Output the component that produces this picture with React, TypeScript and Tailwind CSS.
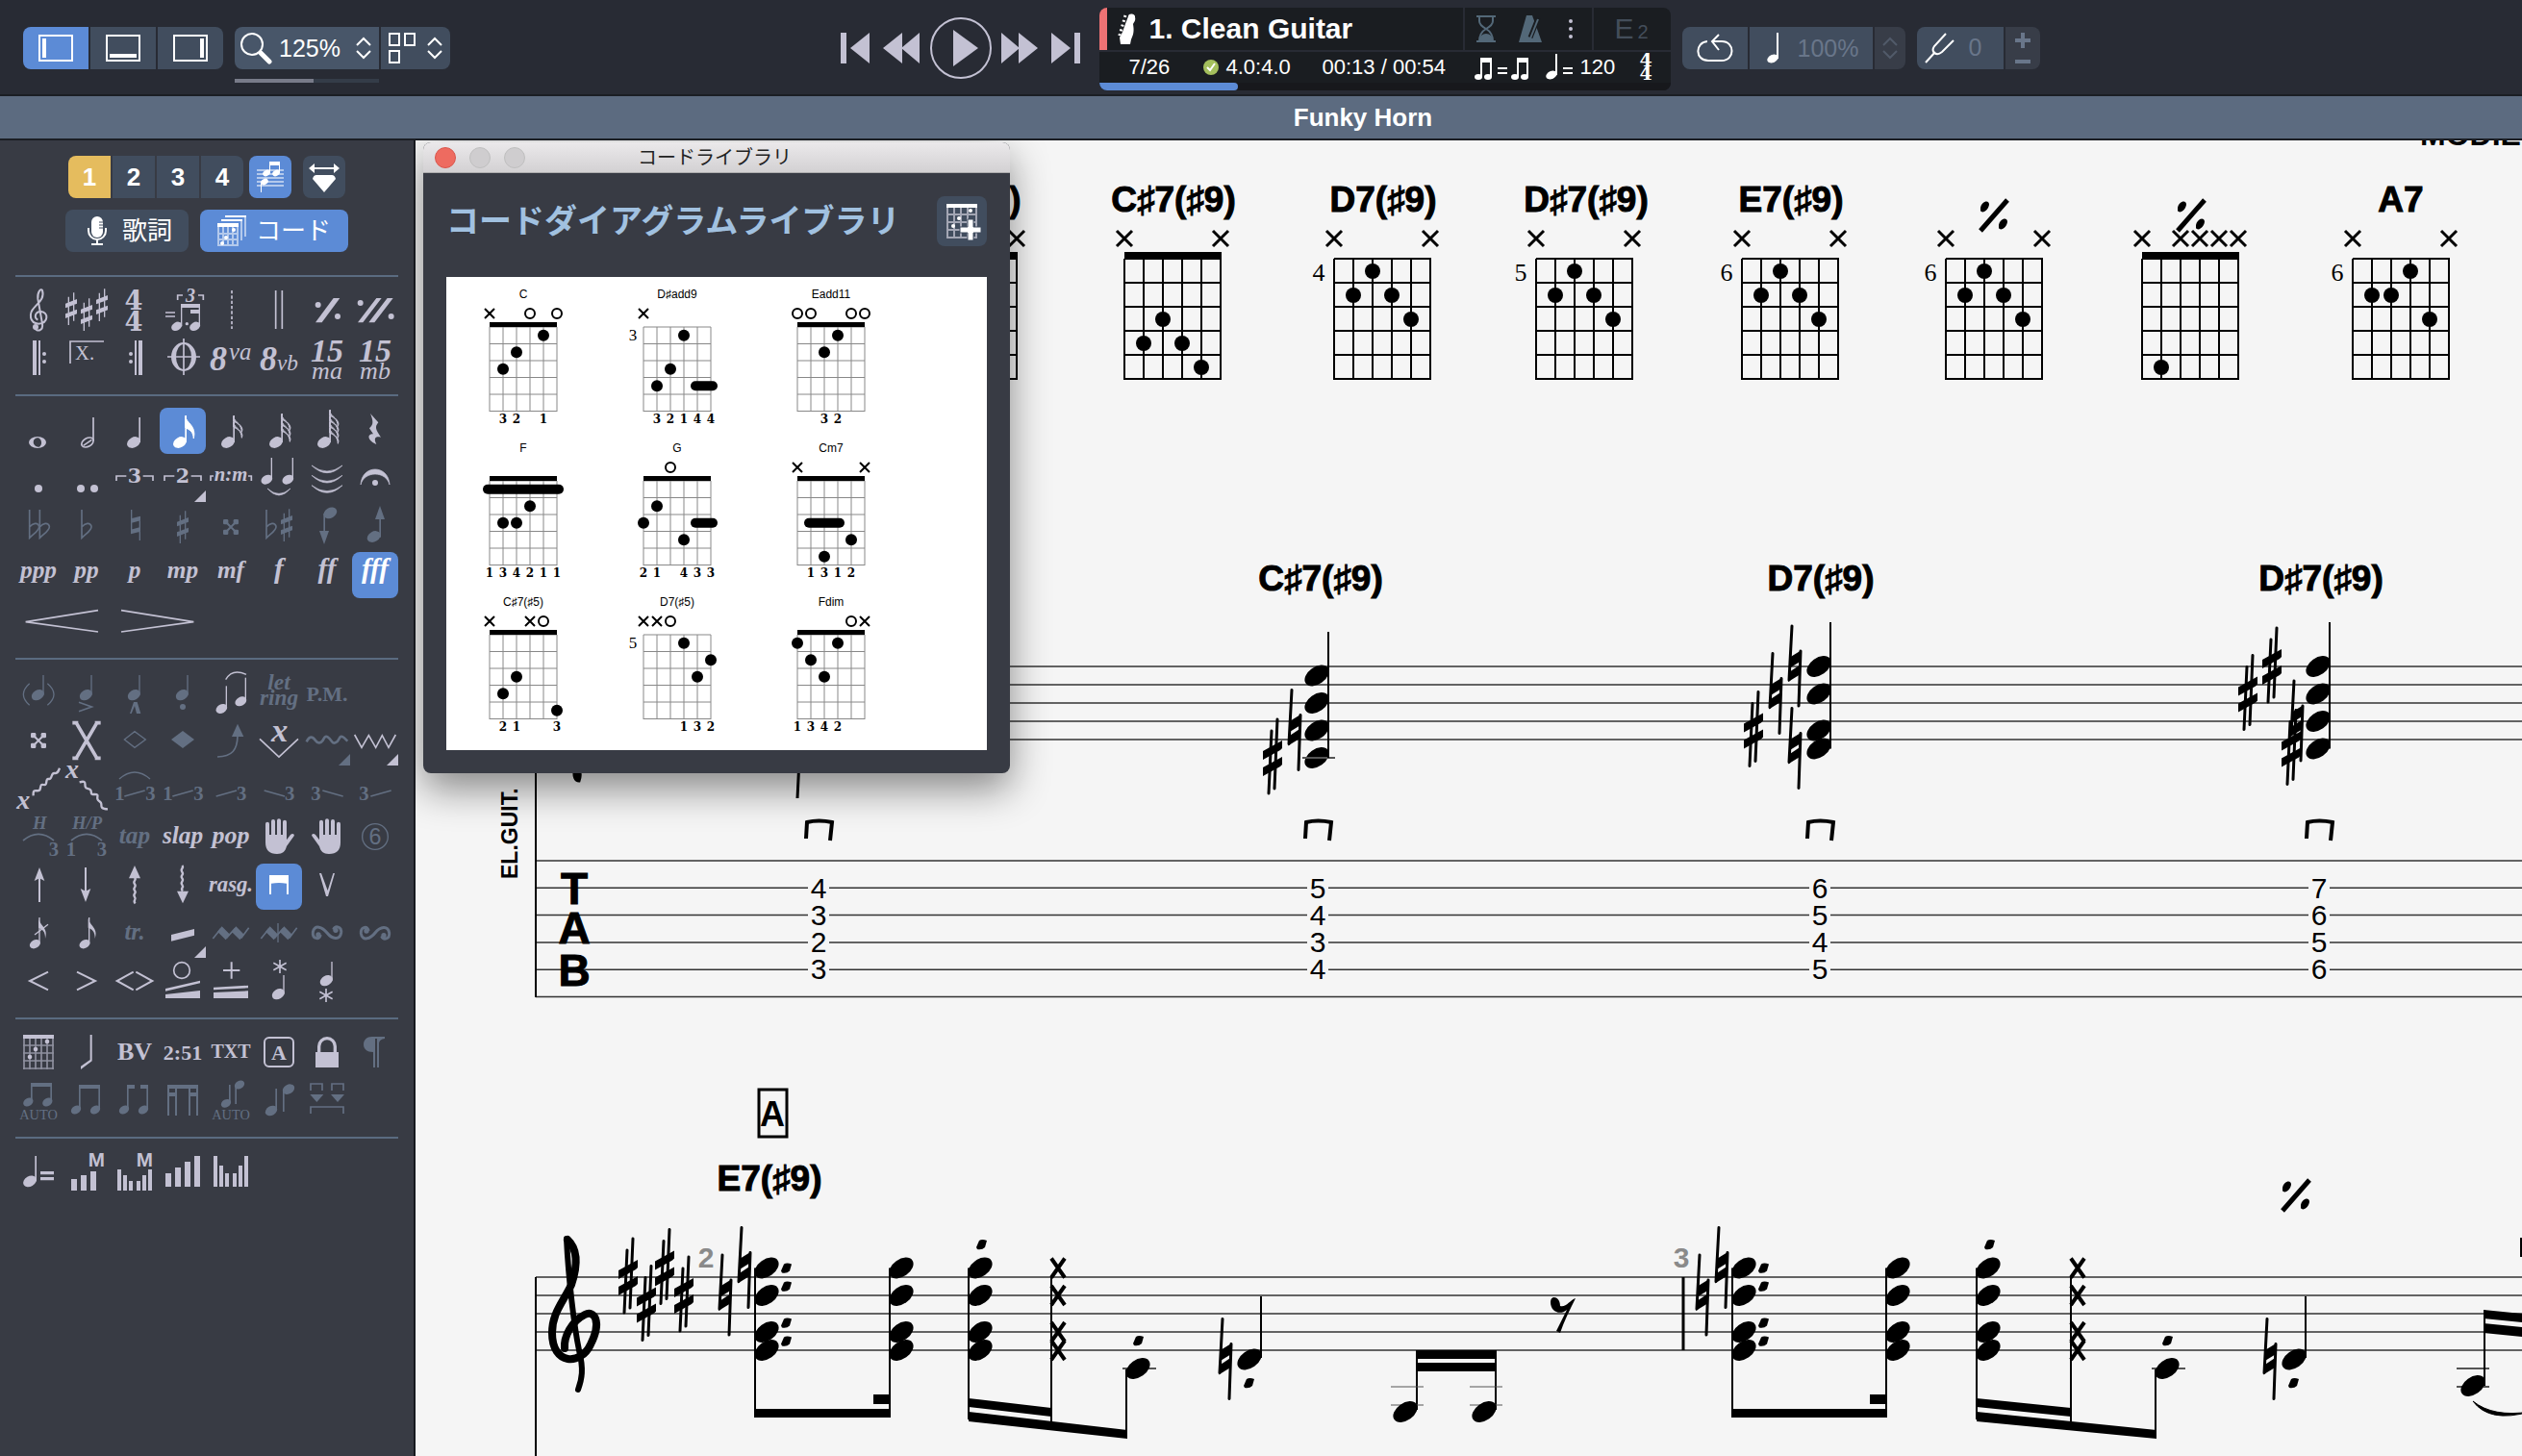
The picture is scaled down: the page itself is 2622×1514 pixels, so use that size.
import { Fragment, useState } from 'react'
import type { ReactNode } from 'react'

// ---------- palette glyphs (every cell is drawn on a 144 x 144 board) ----------

const Head = ({ x, y, s = 1 }: { x: number; y: number; s?: number }) => (
  <ellipse cx={x} cy={y} rx={22 * s} ry={16 * s} transform={`rotate(-30 ${x} ${y})`} />
)

// note with its stem going up to `top`
const Note = ({ x, y, top, s = 1 }: { x: number; y: number; top: number; s?: number }) => (
  <>
    <Head x={x} y={y} s={s} />
    <rect x={x + 20 * s - 4} y={top} width={s < 1 ? 4 : 5} height={y - top} />
  </>
)

const Flags = ({ x, top, n }: { x: number; top: number; n: number }) => (
  <>
    {Array.from({ length: n }, (_, i) => (
      <path
        key={i}
        d={`M${x} ${top + i * 18} c2 22 36 28 26 ${n === 1 ? 70 : 50} c-2 -26 -16 -28 -26 -34z`}
        stroke="currentColor"
        strokeWidth={3}
      />
    ))}
  </>
)

const Sharp = ({ x, y }: { x: number; y: number }) => (
  <path
    transform={`translate(${x} ${y})`}
    d="M-10 -37h4v88h-4z M6 -50h4v88h-4z M-18 -16L18 -30V-16L-18 -2z M-18 16L18 2V16L-18 30z"
  />
)

const Flat = ({ x }: { x: number }) => (
  <path
    d={`M${x} 18V106C${x + 14} 92 ${x + 32} 82 ${x + 30} 70C${x + 26} 56 ${x + 10} 60 ${x} 72`}
    fill="none"
    stroke="currentColor"
    strokeWidth={5}
  />
)

const DoubleSharp = ({ y }: { y: number }) => (
  <g transform={`translate(72 ${y})`}>
    <path d="M-18 -18L18 18M18 -18L-18 18" stroke="currentColor" strokeWidth={6} />
    {[[-24, -24], [8, -24], [-24, 8], [8, 8]].map(([a, b]) => (
      <rect key={`${a}${b}`} x={a} y={b} width={16} height={16} rx={4} />
    ))}
  </g>
)

const Line = ({ d, w = 5, dash }: { d: string; w?: number; dash?: string }) => (
  <path d={d} fill="none" stroke="currentColor" strokeWidth={w} strokeDasharray={dash} />
)

const Dot = ({ x, y, r = 9 }: { x: number; y: number; r?: number }) => <circle cx={x} cy={y} r={r} />

type TProps = { x?: number; y: number; size: number; children: ReactNode; kind?: string; anchor?: 'start' | 'middle' }
const T = ({ x = 72, y, size, children, kind = 'font-bold italic', anchor = 'middle' }: TProps) => (
  <text x={x} y={y} fontSize={size} textAnchor={anchor} className={`font-['Liberation_Serif',serif] ${kind}`}>
    {children}
  </text>
)

// engraved style digits
const Digit = ({ x = 72, y, size, children }: { x?: number; y: number; size: number; children: ReactNode }) => (
  <text x={x} y={y} fontSize={size} textAnchor="middle" className="font-['DejaVu_Serif',serif] font-bold">
    {children}
  </text>
)

const Corner = () => <path d="M108 144L144 108V144z" />

const Asterisk = ({ x, y }: { x: number; y: number }) => (
  <Line d={`M${x} ${y - 21}V${y + 21}M${x - 20} ${y - 11}L${x + 20} ${y + 11}M${x - 20} ${y + 11}L${x + 20} ${y - 11}`} />
)

const Bars = ({ w, list }: { w: number; list: number[][] }) => (
  <>
    {list.map(([x, y, h]) => (
      <rect key={x} x={x} y={y} width={w} height={h} />
    ))}
  </>
)

const Hand = () => (
  <path d="M30 26a6 6 0 0 1 12 0V60h6V18a6 6 0 0 1 12 0V60h6V16a6 6 0 0 1 12 0V60h6V20a6 6 0 0 1 12 0V76L108 60C114 54 122 58 119 64L96 96C92 112 84 120 66 120C42 120 30 108 30 84z" />
)

const Turn = () => (
  <>
    <Line w={9} d="M52 60C46 42 26 48 28 68C32 94 58 84 72 66C88 46 112 42 116 66C118 86 98 90 92 76" />
    <Dot x={45} y={60} r={8} />
    <Dot x={99} y={74} r={8} />
  </>
)

const Mordent = () => (
  <>
    <Line w={5} d="M16 84L40 54L60 80L84 54L106 80L128 50" />
    <path d="M30 62L44 46L70 72L56 88z M74 62L88 46L114 72L100 88z" />
  </>
)

type Cell = { name: string; icon: ReactNode; dim?: boolean; active?: boolean; wide?: boolean }
const c = (name: string, icon: ReactNode, state?: 'dim' | 'active' | 'wide'): Cell => ({
  name,
  icon,
  dim: state === 'dim',
  active: state === 'active',
  wide: state === 'wide',
})

const gap = (name: string) => c(name, null)

const SIGNS: Cell[] = [
  c('Clef', <>
    <Line w={6} d="M60 128C64 142 88 140 84 116L70 38C68 16 80 4 84 12C92 36 72 50 60 64C40 84 44 114 72 116C104 114 104 80 80 78C60 78 58 98 70 104" />
    <Dot x={63} y={126} />
  </>),
  c('Key signature', <><Sharp x={24} y={69} /><Sharp x={72} y={87} /><Sharp x={120} y={57} /></>),
  c('Time signature', <><Digit x={69} y={72} size={82}>4</Digit><Digit x={69} y={138} size={82}>4</Digit></>),
  c('Triplet feel', <>
    <Line d="M18 81H48M18 93H48M56 42V27H72M120 27H136V42" w={5} />
    <T x={96} y={48} size={60}>3</T>
    <Line w={4} d="M68 54V124M124 54V124" />
    <path d="M66 54h60v12h-60z M96 72h30v12h-30z" />
    <Head x={53} y={124} s={0.8} /><Head x={110} y={124} s={0.8} /><Dot x={85} y={116} r={5} />
  </>),
  c('Free time', <Line d="M75 12V132" dash="10 6" />),
  c('Double bar', <Line d="M62 12V132M82 12V132" />),
  c('Simile', <><path d="M36 112H56L112 36H92z" /><Dot x={44} y={57} /><Dot x={105} y={93} /></>),
  c('Double simile', <>
    <path d="M18 112H34L92 36H76z M52 112H70L128 36H110z" /><Dot x={26} y={51} /><Dot x={122} y={93} />
  </>),
  c('Repeat open', <><path d="M54 18h12v108h-12z M72 18h6v108h-6z" /><Dot x={90} y={60} r={6} /><Dot x={90} y={84} r={6} /></>),
  c('Alternate ending', <><Line d="M21 90V21H126" /><T x={36} y={78} size={62} anchor="start" kind="">X.</T></>),
  c('Repeat close', <><path d="M84 18h12v108h-12z M72 18h6v108h-6z" /><Dot x={60} y={60} r={6} /><Dot x={60} y={84} r={6} /></>),
  c('Coda', <>
    <path fillRule="evenodd" d="M36 69a39 45 0 0 1 78 0a39 45 0 0 1 -78 0z M51 69a24 39 0 0 0 48 0a24 39 0 0 0 -48 0z" />
    <Line d="M75 12V126M24 69H126" />
  </>),
  c('8va', <><T x={6} y={111} size={108} anchor="start">8</T><T x={66} y={78} size={74} anchor="start" kind="italic">va</T></>),
  c('8vb', <><T x={12} y={111} size={108} anchor="start">8</T><T x={66} y={111} size={70} anchor="start" kind="italic">vb</T></>),
  c('15ma', <><T y={84} size={102}>15</T><T y={138} size={78} kind="italic">ma</T></>),
  c('15mb', <><T y={84} size={102}>15</T><T y={138} size={78} kind="italic">mb</T></>),
]

const DURATIONS: Cell[] = [
  c('Whole note', <path fillRule="evenodd" d="M42 108a27 18 0 0 1 54 0a27 18 0 0 1 -54 0z M58 100c-6 12 4 24 16 22c10 -4 10 -22 -2 -28c-6 -2 -12 2 -14 6z" />),
  c('Half note', <>
    <ellipse cx={75} cy={108} rx={20} ry={13} transform="rotate(-30 75 108)" fill="none" stroke="currentColor" strokeWidth={5} />
    <Line w={5} d="M62 118L88 100" /><Line d="M93 30V104" />
  </>),
  c('Quarter note', <Note x={69} y={108} top={30} />),
  c('Eighth note', <><Note x={63} y={108} top={24} /><Flags x={80} top={26} n={1} /></>, 'active'),
  c('16th note', <><Note x={63} y={108} top={24} /><Flags x={80} top={26} n={2} /></>),
  c('32nd note', <><Note x={63} y={108} top={18} /><Flags x={80} top={20} n={3} /></>),
  c('64th note', <><Note x={63} y={108} top={6} /><Flags x={80} top={8} n={4} /></>),
  c('Rest', <path d="M57 18L82 46C70 60 74 68 90 92C74 88 66 94 76 114C50 104 44 82 66 82L54 64C68 52 66 40 57 18z" />),
  c('Dotted', <Dot x={72} y={102} r={12} />),
  c('Double dotted', <><Dot x={54} y={102} r={12} /><Dot x={96} y={102} r={12} /></>),
  c('Triplet', <><Line d="M15 78V63H46M98 63H129V78" /><Digit y={83} size={62}>3</Digit></>),
  c('Duplet', <><Line d="M15 78V63H46M98 63H129V78" /><Digit y={83} size={62}>2</Digit><Corner /></>),
  c('Tuplet', <><Line d="M9 78V63H18M126 63H136V78" /><T y={78} size={62}>n:m</T></>),
  c('Tie', <>
    <Note x={34} y={74} top={6} s={0.85} /><Note x={100} y={74} top={6} s={0.85} />
    <path d="M36 102Q72 144 108 102Q72 134 36 102z" stroke="currentColor" strokeWidth={2} />
  </>),
  c('Tie beat', <path stroke="currentColor" strokeWidth={2} d="M24 30Q72 76 120 30Q72 66 24 30z M24 61Q72 107 120 61Q72 97 24 61z M24 92Q72 138 120 92Q72 128 24 92z" />),
  c('Fermata', <><path d="M27 90C30 26 114 26 117 90C106 46 38 46 27 90z" stroke="currentColor" strokeWidth={2} /><Dot x={72} y={84} /></>),
  c('Double flat', <><Flat x={44} /><Flat x={76} /></>, 'dim'),
  c('Flat', <Flat x={57} />, 'dim'),
  c('Natural', <path d="M60 18h4v72h-4z M86 42h4v72h-4z M60 46L90 38V52L60 60z M60 80L90 72V86L60 94z" />, 'dim'),
  c('Sharp', <Sharp x={72} y={72} />, 'dim'),
  c('Double sharp', <DoubleSharp y={72} />, 'dim'),
  c('Enharmonic', <><Flat x={33} /><Sharp x={96} y={66} /></>, 'dim'),
  c('Semitone down', <><Head x={82} y={28} /><path d="M61 30h5v60h-5z M48 84H78L63 126z" /></>, 'dim'),
  c('Semitone up', <><Head x={68} y={102} /><path d="M85 30h5v74h-5z" /><path d="M72 48H102L87 6z" /></>, 'dim'),
  ...['ppp', 'pp', 'p', 'mp', 'mf', 'f', 'ff', 'fff'].map(d =>
    c(d, <T y={80} size={d.startsWith('f') ? 88 : 76}>{d}</T>, d === 'fff' ? 'active' : undefined)
  ),
  c('Crescendo', <Line d="M258 32L32 68L258 99" />, 'wide'),
  c('Decrescendo', <Line d="M30 32L256 68L30 99" />, 'wide'),
]

const slide = (d: string, one: number | null, three: number) => (
  <>
    <Line d={d} />
    {one !== null && <T x={one} y={101} size={62} anchor="start" kind="font-bold">1</T>}
    <T x={three} y={101} size={62} anchor="start" kind="font-bold">3</T>
  </>
)

const EFFECTS: Cell[] = [
  c('Ghost note', <><Note x={70} y={74} top={12} s={0.95} /><Line w={4} d="M44 38Q6 72 44 106M100 38Q140 72 100 106" /></>, 'dim'),
  c('Accent', <><Note x={70} y={74} top={12} s={0.95} /><Line d="M48 97L88 111L48 125" /></>, 'dim'),
  c('Heavy accent', <><Note x={70} y={74} top={12} s={0.95} /><path d="M57 132L69 96H80L91 132H78L72 108L62 132z" /></>, 'dim'),
  c('Staccato', <><Note x={70} y={74} top={12} s={0.95} /><Dot x={72} y={111} /></>, 'dim'),
  c('Legato', <><Note x={43} y={117} top={46} s={0.85} /><Note x={103} y={94} top={20} s={0.85} /><Line w={4} d="M56 26Q76 -10 120 10" /></>),
  c('Let ring', <><T y={56} size={70}>let</T><T y={106} size={70}>ring</T></>, 'dim'),
  c('Palm mute', <T y={94} size={66} kind="font-bold">P.M.</T>, 'dim'),
  gap(''),
  c('Dead note', <DoubleSharp y={66} />),
  c('Dead slap', <Line w={11} d="M38 8L106 124M106 8L38 124M28 11H46M98 11H116M28 121H46M98 121H116" />),
  c('Natural harmonic', <Line w={4} d="M40 63L72 38L106 63L72 88z" />, 'dim'),
  c('Artificial harmonic', <path d="M36 63L72 36L108 63L72 90z" />, 'dim'),
  c('Bend', <><Line d="M30 117C76 116 92 96 93 52" /><path d="M93 14L112 54H75z" /></>, 'dim'),
  c('Whammy dip', <><T x={74} y={68} size={104}>x</T><Line d="M12 61L72 117L132 61" /></>),
  c('Vibrato', <><Line w={8} d="M8 70C18 50 28 54 36 66S56 74 62 60S80 58 86 68S104 74 110 60S126 58 136 68" /><Corner /></>, 'dim'),
  c('Wide vibrato', <><Line d="M8 48L30 88L52 50L74 88L94 50L114 88L136 48" /><Corner /></>),
  c('Pick scrape up', <><T x={4} y={130} size={84} anchor="start">x</T><Line w={7} d="M56 88C54 64 66 76 74 72S74 50 88 54S92 34 104 36S110 16 122 18S134 10 138 2" /></>),
  c('Pick scrape down', <><T x={6} y={34} size={84} anchor="start">x</T><Line w={7} d="M50 46C72 40 66 50 68 60S84 62 86 74S84 84 98 84S104 90 106 98S118 106 118 114S116 130 138 130" /></>),
  c('Legato slide', <>{slide('M40 90L104 72', 10, 106)}<Line w={4} d="M24 36Q72 -6 120 36" /></>, 'dim'),
  c('Shift slide', slide('M40 90L104 72', 10, 106), 'dim'),
  c('Slide in from below', slide('M26 90L90 72', null, 90), 'dim'),
  c('Slide in from above', slide('M26 72L90 90', null, 90), 'dim'),
  c('Slide out downwards', slide('M58 72L122 90', null, 22), 'dim'),
  c('Slide out upwards', slide('M58 90L122 72', null, 22), 'dim'),
  c('Hammer on', <><T x={76} y={41} size={56}>H</T><Line d="M24 78Q72 38 120 78" /><T x={104} y={125} size={62} anchor="start" kind="font-bold">3</T></>, 'dim'),
  c('Hammer on pull off', <><T x={74} y={41} size={56}>H/P</T><Line d="M24 78Q72 38 120 78" /><T x={8} y={125} size={62} anchor="start" kind="font-bold">1</T><T x={104} y={125} size={62} anchor="start" kind="font-bold">3</T></>, 'dim'),
  c('Tapping', <T y={86} size={76}>tap</T>, 'dim'),
  c('Slap', <T y={86} size={76}>slap</T>),
  c('Pop', <T y={86} size={78}>pop</T>),
  c('Left hand fingering', <Hand />),
  c('Right hand fingering', <g transform="translate(144 0) scale(-1 1)"><Hand /></g>),
  c('String number', <>
    <circle cx={72} cy={66} r={40} fill="none" stroke="currentColor" strokeWidth={4} />
    <text x={72} y={91} fontSize={70} textAnchor="middle" className="font-['Liberation_Sans',sans-serif]">6</text>
  </>, 'dim'),
  c('Arpeggio up', <><Line w={6} d="M75 44V120" /><path d="M75 12L91 54L75 46L59 54z" /></>),
  c('Arpeggio down', <><Line w={6} d="M69 12V90" /><path d="M69 120L85 78L69 86L53 78z" /></>),
  c('Brush up', <><path d="M72 6L90 46H54z" /><Line w={7} d="M72 44c8 8 -8 10 0 20s-8 10 0 20s-8 10 0 20s-8 10 2 20" /></>),
  c('Brush down', <><path d="M72 124L90 86H54z" /><Line w={7} d="M70 6c8 8 -8 10 0 20s-8 10 0 20s-8 10 0 20s-8 10 2 20" /></>),
  c('Rasgueado', <T y={86} size={68}>rasg.</T>),
  c('Downstroke', <path d="M42 36H102V96H96V62Q72 58 48 62V96H42z" />, 'active'),
  c('Upstroke', <path d="M48 30H54L74 84L91 30H96L75 102H69z" />),
  gap(''),
  c('Grace note before beat', <><Note x={61} y={101} top={18} s={0.8} /><path d="M72 20C76 44 104 50 93 84C94 60 82 54 72 50z" /><Line w={4} d="M60 72L102 40" /></>),
  c('Grace note on beat', <><Note x={66} y={101} top={18} s={0.8} /><path d="M77 20C81 44 110 50 98 84C99 60 87 54 77 50z" /></>),
  c('Trill', <T y={88} size={74}>tr.</T>, 'dim'),
  c('Tremolo picking', <><path d="M36 72L108 54V74L36 92z" /><Corner /></>),
  c('Upper mordent', <Mordent />, 'dim'),
  c('Lower mordent', <><Mordent /><Line w={4} d="M69 36V96" /></>, 'dim'),
  c('Turn', <g transform="translate(0 132) scale(1 -1)"><Turn /></g>, 'dim'),
  c('Inverted turn', <Turn />, 'dim'),
  c('Fade in', <Line w={6} d="M102 38L45 66L102 94" />),
  c('Fade out', <Line w={6} d="M42 38L99 66L42 94" />),
  c('Volume swell', <Line w={6} d="M68 38L17 66L68 94M76 38L127 66L76 94" />),
  c('Wah open', <>
    <circle cx={69} cy={33} r={25} fill="none" stroke="currentColor" strokeWidth={5} />
    <path d="M18 90L126 65V73L18 98z M18 108L126 96V120H18z" />
  </>),
  c('Wah close', <><Line w={6} d="M74 7V59M48 33H100" /><path d="M18 86L126 80V88L18 94z M18 102L126 97V120H18z" /></>),
  c('Pedal down', <><Asterisk x={75} y={21} /><Note x={70} y={107} top={48} s={0.95} /></>),
  c('Pedal up', <><Note x={70} y={65} top={6} s={0.95} /><Asterisk x={69} y={111} /></>),
]

const ANNOTATIONS: Cell[] = [
  c('Chord', <>
    <path className="text-[#8f91a0]" fill="none" stroke="currentColor" strokeWidth={5} d="M27 18V126M45 18V126M63 18V126M81 18V126M99 18V126M117 18V126M24 51H120M24 75H120M24 99H120M24 123H120" />
    <rect x={24} y={18} width={96} height={12} />
    <Dot x={99} y={39} r={7} /><Dot x={63} y={63} r={7} /><Dot x={45} y={87} r={7} />
  </>),
  c('Slash notation', <path d="M83 18H89V100L54 126V116L83 96z" />),
  c('Barre', <T y={97} size={78} kind="font-bold">BV</T>),
  c('Timer', <T y={96} size={66} kind="font-bold">2:51</T>),
  c('Text', <T y={91} size={60} kind="font-bold">TXT</T>),
  c('Section', <>
    <rect x={27} y={27} width={90} height={90} rx={14} fill="none" stroke="currentColor" strokeWidth={6} />
    <T y={95} size={66} kind="font-bold">A</T>
  </>),
  c('Lock', <><rect x={36} y={72} width={72} height={48} /><Line w={10} d="M47 74V54a25 25 0 0 1 50 0V74" /></>),
  c('Paragraph', <path d="M102 24V30Q86 32 84 44V120H78V30H72V120H66V72C46 72 36 62 36 48S46 24 62 24z" />, 'dim'),
  c('Auto beam', <><Head x={40} y={78} s={0.75} /><Head x={100} y={78} s={0.75} /><path d="M48 18h66v60h-5v-48h-56v48h-5z" /><T y={132} size={43} kind="">AUTO</T></>, 'dim'),
  c('Force beam', <><Head x={39} y={102} s={0.75} /><Head x={99} y={102} s={0.75} /><path d="M48 24h66v78h-5v-66h-56v66h-5z" /></>, 'dim'),
  c('Break beam', <><Head x={39} y={102} s={0.75} /><Head x={99} y={102} s={0.75} /><path d="M48 24h24v12h-19v66h-5z M90 24h24v78h-5v-66h-19z" /></>, 'dim'),
  c('Break secondary beam', <path d="M24 24h96v12h-96z M24 36h6v84h-6z M48 36h6v84h-6z M90 36h6v84h-6z M114 36h6v84h-6z M30 48h18v12h-18z M96 48h18v12h-18z" />, 'dim'),
  c('Auto stem', <><Head x={57} y={82} s={0.75} /><Head x={99} y={24} s={0.75} /><path d="M66 24h5v58h-5z M85 24h5v60h-5z" /><T y={132} size={43} kind="">AUTO</T></>, 'dim'),
  c('Invert stem', <><Head x={48} y={105} s={0.9} /><Head x={102} y={38} s={0.9} /><path d="M61 36h5v68h-5z M84 38h5v70h-5z" /></>, 'dim'),
  c('Bar break', <><Line d="M21 42V21H57V42M87 42V21H123V42M21 114V93H123V114" /><path d="M19 54H61L40 78z M84 54H126L105 78z" /></>, 'dim'),
]

const AUTOMATIONS: Cell[] = [
  c('Tempo', <><Note x={45} y={97} top={18} /><path d="M78 66h42v10h-42z M78 84h42v10h-42z" /></>),
  c('Master volume', <><Bars w={18} list={[[24, 90, 36], [54, 78, 48], [84, 66, 60]]} /><text x={77} y={50} fontSize={62} className="font-['Liberation_Sans',sans-serif] font-bold">M</text></>),
  c('Master pan', <><Bars w={12} list={[[18, 60, 66], [36, 78, 48], [54, 96, 30], [78, 96, 30], [96, 78, 48], [114, 60, 66]]} /><text x={77} y={50} fontSize={62} className="font-['Liberation_Sans',sans-serif] font-bold">M</text></>),
  c('Track volume', <Bars w={18} list={[[18, 72, 42], [48, 54, 60], [78, 36, 78], [108, 18, 96]]} />),
  c('Track pan', <Bars w={12} list={[[18, 18, 96], [36, 48, 66], [54, 72, 42], [78, 72, 42], [96, 48, 66], [114, 18, 96]]} />),
]

function Palette({ cells, className }: { cells: Cell[]; className: string }) {
  return (
    <section className={`grid grid-cols-[repeat(8,48px)] gap-0.5 border-t-2 border-[#5a6b80] ${className}`}>
      {cells.map((cell, i) =>
        cell.icon === null ? (
          <span key={i} />
        ) : (
          <button
            key={i}
            aria-label={cell.name}
            className={`h-12 rounded-lg ${cell.wide ? 'col-span-2' : ''} ${
              cell.active ? 'bg-[#5c8bd6] text-white' : cell.dim ? 'text-[#636f82]' : 'text-[#c3c1d3]'
            }`}
          >
            <svg viewBox={cell.wide ? '0 0 294 144' : '0 0 144 144'} className="h-full w-full overflow-visible" fill="currentColor">
              {cell.icon}
            </svg>
          </button>
        )
      )}
    </section>
  )
}

// ---------- toolbar ----------

const Chevrons = () => (
  <svg viewBox="0 0 16 24" className="h-6 w-4 shrink-0" fill="none" stroke="currentColor" strokeWidth={2}>
    <path d="M1 9L8 2L15 9M1 15L8 22L15 15" />
  </svg>
)

function PanelButton({ label, bar, on, shape }: { label: string; bar: string; on?: boolean; shape: string }) {
  return (
    <button aria-label={label} className={`flex h-11 w-[68px] items-center justify-center ${shape} ${on ? 'bg-[#5c8bd6]' : 'bg-[#414d5e]'}`}>
      <svg viewBox="0 0 36 28" className="h-7 w-9">
        <rect x={1} y={1} width={34} height={26} fill="none" stroke="#fff" strokeWidth={2} />
        <path d={bar} fill="#fff" />
      </svg>
    </button>
  )
}

const TRANSPORT = [
  ['Go to start', 'h-8 w-[30px] mr-[14px]', '0 0 30 32', 'M0 0H6V32H0z M30 0V32L10 16z'],
  ['Rewind', 'h-8 w-[38px] mr-[11px]', '0 0 38 32', 'M20 0V32L0 16z M38 0V32L19 16z'],
  ['Play', 'h-16 w-16 mr-[10px]', '0 0 64 64', 'M24 13L50 32L24 51z'],
  ['Forward', 'h-8 w-[38px] mr-[14px]', '0 0 38 32', 'M0 0V32L19 16z M18 0V32L38 16z'],
  ['Go to end', 'h-8 w-[30px] mr-5', '0 0 30 32', 'M24 0H30V32H24z M0 0V32L20 16z'],
]

const BeamedPair = ({ x }: { x: number }) => (
  <>
    <ellipse cx={x + 4} cy={24} rx={4} ry={3} />
    <ellipse cx={x + 14} cy={24} rx={4} ry={3} />
    <path d={`M${x + 6} 4h12v20h-2v-15h-8v15h-2z`} />
  </>
)

function Toolbar() {
  const [zoom, setZoom] = useState('125%')

  return (
    <header className="grid h-[100px] grid-cols-[1fr_auto_1fr] items-start border-b-2 border-[#1b1e24] bg-[#282b34] pr-3 text-white">
      <div className="flex gap-3 pl-6 pt-7">
        <div className="flex gap-0.5">
          <PanelButton label="Edition palette" on shape="rounded-l-lg" bar="M4 4h4v20h-4z" />
          <PanelButton label="Global view" shape="" bar="M4 20h28v4h-28z" />
          <PanelButton label="Song inspector" shape="rounded-r-lg" bar="M28 4h4v20h-4z" />
        </div>
        <div className="flex items-start gap-0.5">
          <div>
            <label className="flex h-11 w-[150px] items-center rounded-l-lg bg-[#485669] pl-1.5 pr-2">
              <svg viewBox="0 0 34 34" className="h-[34px] w-[34px] shrink-0" stroke="#fff" fill="none">
                <circle cx={12} cy={13} r={11} strokeWidth={2} />
                <path d="M21 22L30 31" strokeWidth={5} strokeLinecap="round" />
              </svg>
              <select
                aria-label="Zoom"
                value={zoom}
                onChange={e => setZoom(e.target.value)}
                className="ml-1.5 w-full appearance-none bg-transparent text-[25px] leading-8 outline-none"
              >
                <option>100%</option>
                <option>125%</option>
                <option>150%</option>
              </select>
              <Chevrons />
            </label>
            <div className="mt-[10px] h-1 bg-[#343c48]">
              <div className="h-1 w-[82px] bg-[#787b89]" />
            </div>
          </div>
          <button aria-label="Page layout" className="flex h-11 w-[72px] items-center justify-between rounded-r-lg bg-[#414d5e] px-2">
            <svg viewBox="0 0 28 32" className="h-8 w-7" fill="none" stroke="#fff" strokeWidth={2}>
              <path d="M1 1h10v12h-10z M17 1h10v12h-10z M1 19h10v12h-10z" />
            </svg>
            <Chevrons />
          </button>
        </div>
      </div>

      <div className="flex">
        <nav className="mt-[18px] flex h-16 items-center text-[#c3c1d3]">
          {TRANSPORT.map(([label, cls, box, d]) => (
            <button key={label} aria-label={label} className={cls}>
              <svg viewBox={box} className="h-full w-full" fill="currentColor">
                {label === 'Play' && <circle cx={32} cy={32} r={31} fill="none" stroke="currentColor" strokeWidth={2} />}
                <path d={d} />
              </svg>
            </button>
          ))}
        </nav>

        <div className="mt-2 w-[594px] overflow-hidden rounded-lg bg-[#1a1d21]">
          <div className="flex h-11">
            <div className="w-2 bg-[#ee7274]" />
            <div className="flex flex-1 items-center pl-2.5">
              <svg viewBox="0 0 22 34" className="h-[34px] w-[22px]" fill="#fff">
                <path d="M12 4C12 0 20 1 19 5C20 8 18 10 17 12C18 18 18 22 15 28L14 33H4L3 26C6 22 8 14 12 4z" />
                <path d="M9 3L2 27" stroke="#fff" strokeWidth={3} strokeDasharray="2 3" />
              </svg>
              <span className="ml-3 text-[30px] font-bold leading-9">1. Clean Guitar</span>
            </div>
            <div className="flex w-[134px] items-center justify-between border-l-2 border-[#282b34] pl-3 pr-5 text-[#536878]">
              <svg viewBox="0 0 20 28" className="h-7 w-5" fill="currentColor">
                <path d="M0 0h20v2h-20z M0 26h20v2h-20z M3 26Q4 19 10 19T17 26z" />
                <path d="M3 1V6Q3 10 10 14Q17 18 17 27M17 1V6Q17 10 10 14Q3 18 3 27" fill="none" stroke="currentColor" strokeWidth={2} />
              </svg>
              <svg viewBox="0 0 24 28" className="ml-5 h-7 w-6" fill="currentColor">
                <path d="M8 0H14L24 28H0z" />
                <path d="M20 3L12 23" stroke="#1a1d21" strokeWidth={5} />
                <path d="M20 4L12 24" stroke="currentColor" strokeWidth={2} />
              </svg>
              <svg viewBox="0 0 4 20" className="ml-6 h-5 w-1" fill="#c3c1d3">
                <circle cx={2} cy={2} r={2} /><circle cx={2} cy={10} r={2} /><circle cx={2} cy={18} r={2} />
              </svg>
            </div>
            <div className="flex w-[82px] items-baseline border-l-2 border-[#282b34] pl-[22px] pt-1 text-[30px] leading-9 text-[#434d5a]">
              E<span className="ml-1 text-xl">2</span>
            </div>
          </div>
          <div className="grid h-[34px] grid-cols-[77px_124px_158px_74px_97px_auto] items-center border-t-2 border-[#282b34] pl-[31px] text-[22px] leading-8">
            <span>7/26</span>
            <span className="flex items-center gap-2">
              <svg viewBox="0 0 16 16" className="h-4 w-4">
                <circle cx={8} cy={8} r={8} fill="#a4bf5d" />
                <path d="M4 8L7 11L12 4" fill="none" stroke="#fff" strokeWidth={2} />
              </svg>
              4.0:4.0
            </span>
            <span>00:13 / 00:54</span>
            <svg viewBox="0 0 58 28" className="h-7 w-[58px]" fill="#fff">
              <BeamedPair x={0} /><BeamedPair x={38} />
              <path d="M24 14h10v2h-10z M24 19h10v2h-10z" />
            </svg>
            <span className="flex items-center gap-2">
              <svg viewBox="0 0 28 28" className="h-7 w-7" fill="#fff">
                <ellipse cx={6} cy={22} rx={6} ry={4} transform="rotate(-25 6 22)" />
                <path d="M10 0h2v22h-2z M18 14h10v2h-10z M18 19h10v2h-10z" />
              </svg>
              120
            </span>
            <svg viewBox="0 0 14 30" className="h-[30px] w-[14px] overflow-visible" fill="#fff">
              <text x={7} y={14} fontSize={19} textAnchor="middle" className="font-['DejaVu_Serif',serif] font-bold">4</text>
              <text x={7} y={28} fontSize={19} textAnchor="middle" className="font-['DejaVu_Serif',serif] font-bold">4</text>
            </svg>
          </div>
          <div className="h-2 bg-[#17181c]">
            <div className="h-2 w-36 rounded-r bg-[#5c8bd6]" />
          </div>
        </div>
      </div>

      <div className="ml-3 mt-7 flex h-11 gap-3 text-[#69768a]">
        <div className="flex gap-0.5">
          <button aria-label="Loop" className="flex w-[68px] items-center justify-center rounded-l-lg bg-[#414d5e]">
            <svg viewBox="0 0 38 30" className="h-[30px] w-[38px]" fill="none" stroke="#fff" strokeWidth={2}>
              <path d="M11 8C-2 9 -2 28 12 28H26C40 28 40 8 26 8H16M23 1L16 8L23 17" />
            </svg>
          </button>
          <label className="flex w-[128px] items-center bg-[#414d5e] pl-[18px]">
            <svg viewBox="0 0 14 32" className="h-8 w-[14px] shrink-0" fill="#fff">
              <ellipse cx={6} cy={27} rx={6} ry={4} transform="rotate(-25 6 27)" />
              <path d="M10 0h2v27h-2z" />
            </svg>
            <select aria-label="Relative speed" className="ml-[18px] w-full appearance-none bg-transparent text-[25px] leading-8">
              <option>100%</option>
            </select>
          </label>
          <button aria-label="Change speed" className="flex w-8 items-center justify-center rounded-r-lg bg-[#383d48] text-[#515a69]">
            <Chevrons />
          </button>
        </div>
        <div className="flex gap-0.5">
          <button className="flex w-[90px] items-center gap-3.5 rounded-l-lg bg-[#414d5e] pl-2 text-[25px]">
            <svg viewBox="0 0 32 32" className="h-8 w-8" fill="none" stroke="#fff" strokeWidth={2}>
              <path d="M1 31L11 20M22 1L10 14C6 20 12 25 18 20L30 8" />
            </svg>
            0
          </button>
          <div className="flex w-9 flex-col items-center justify-around rounded-r-lg bg-[#383d48]">
            <button aria-label="Transpose up">
              <svg viewBox="0 0 16 16" className="h-4 w-4" fill="currentColor"><path d="M6 0h4v6h6v4h-6v6h-4v-6h-6v-4h6z" /></svg>
            </button>
            <button aria-label="Transpose down">
              <svg viewBox="0 0 16 4" className="h-1 w-4" fill="currentColor"><path d="M0 0h16v4h-16z" /></svg>
            </button>
          </div>
        </div>
      </div>
    </header>
  )
}

// ---------- sidebar ----------

function Sidebar() {
  const [voice, setVoice] = useState(1)

  return (
    <aside className="w-[432px] shrink-0 border-r-2 border-[#17191f] bg-[#383b44] px-4 pt-4 text-white">
      <div className="flex justify-center">
        <div className="mr-1.5 flex gap-0.5">
          {[1, 2, 3, 4].map(v => (
            <button
              key={v}
              onClick={() => setVoice(v)}
              className={`h-11 w-11 text-[26px] font-bold first:rounded-l-lg last:rounded-r-lg ${
                voice === v ? 'bg-[#e5bc5e]' : 'bg-[#414d5e]'
              }`}
            >
              {v}
            </button>
          ))}
        </div>
        <button aria-label="Multivoice" className="mr-3 h-11 w-11 rounded-lg bg-[#5c8bd6]">
          <svg viewBox="0 0 44 44" fill="#fff">
            <path d="M8 15h28M8 19h28M8 23h28M8 27h28M8 31h28" stroke="#b3c9ec" strokeWidth={2} />
            <ellipse cx={18} cy={18} rx={4} ry={3} transform="rotate(-30 18 18)" />
            <ellipse cx={28} cy={18} rx={4} ry={3} transform="rotate(-30 28 18)" />
            <path d="M21 6h11v12h-1v-8h-9v8h-1z" />
            <ellipse cx={16} cy={27} rx={4} ry={3} transform="rotate(-30 16 27)" />
            <path d="M12 27h1v11h-1z" />
          </svg>
        </button>
        <button aria-label="Design mode" className="h-11 w-11 rounded-lg bg-[#414d5e]">
          <svg viewBox="0 0 44 44" fill="#fff">
            <path d="M6 13L12 8V12H32V8L38 13L32 18V14H12V18z M10 24Q11 20 14 20H30Q33 20 34 24L22 38z" />
          </svg>
        </button>
      </div>

      <div className="mb-6 mt-3 flex justify-center gap-3 text-[26px]">
        <button className="flex h-11 w-32 items-center justify-center gap-4 rounded-lg bg-[#414d5e] pl-1.5">
          <svg viewBox="0 0 20 30" className="h-[30px] w-5" fill="#fff">
            <rect x={4} y={0} width={12} height={22} rx={6} />
            <path d="M1 12V15A9 9 0 0 0 19 15V12M10 24V28M4 29H16" fill="none" stroke="#fff" strokeWidth={2} />
            <path d="M12 6h4M12 9h4M12 12h4" stroke="#414d5e" />
          </svg>
          歌詞
        </button>
        <button className="flex h-11 w-[154px] items-center justify-center gap-2.5 rounded-lg bg-[#5c8bd6]">
          <svg viewBox="0 0 30 32" className="h-8 w-[30px]" fill="#fff">
            <path d="M29 1V22M25 5V26" stroke="#b3c9ec" strokeWidth={2} />
            <path d="M8 0h22v2h-22z M4 4h22v2h-22z M0 8h22v4h-22z" />
            <path d="M1 12V32M6 12V32M11 12V32M16 12V32M21 12V32M0 19H22M0 25H22M0 31H22" stroke="#b3c9ec" strokeWidth={2} />
            <circle cx={17} cy={15} r={2} /><circle cx={9} cy={23} r={2} /><circle cx={5} cy={29} r={2} />
          </svg>
          コード
        </button>
      </div>

      <Palette cells={SIGNS} className="pb-3.5 pt-2.5" />
      <Palette cells={DURATIONS} className="py-3" />
      <Palette cells={EFFECTS} className="py-3" />
      <Palette cells={ANNOTATIONS} className="pb-3.5 pt-2.5" />
      <Palette cells={AUTOMATIONS} className="pt-3" />
    </aside>
  )
}

// ---------- chord diagrams ----------

type Diagram = {
  name: string
  marks: string // one sign per string: x, o or blank
  dots: number[][] // [string, fret]
  barre?: number[] // [from string, to string, fret]
  fret?: number
  fingers?: string
}

const LIBRARY: Diagram[] = [
  { name: 'C', marks: 'x  o o', dots: [[4, 1], [2, 2], [1, 3]], fingers: ' 32 1 ' },
  { name: 'D♯add9', marks: 'x     ', dots: [[3, 1], [2, 3], [1, 4]], barre: [4, 5, 4], fret: 3, fingers: ' 32144' },
  { name: 'Eadd11', marks: 'oo  oo', dots: [[3, 1], [2, 2]], fingers: '  32  ' },
  { name: 'F', marks: '      ', dots: [[3, 2], [1, 3], [2, 3]], barre: [0, 5, 1], fingers: '134211' },
  { name: 'G', marks: '  o   ', dots: [[1, 2], [0, 3], [3, 4]], barre: [4, 5, 3], fingers: '21 433' },
  { name: 'Cm7', marks: 'x    x', dots: [[4, 4], [2, 5]], barre: [1, 3, 3], fingers: ' 1312 ' },
  { name: 'C♯7(♯5)', marks: 'x  xo ', dots: [[2, 3], [1, 4], [5, 5]], fingers: ' 21  3' },
  { name: 'D7(♯5)', marks: 'xxo   ', dots: [[3, 1], [5, 2], [4, 3]], fret: 5, fingers: '   132' },
  { name: 'Fdim', marks: '    ox', dots: [[0, 1], [3, 1], [1, 2], [2, 3]], fingers: '1342  ' },
]

function LibraryChord({ chord }: { chord: Diagram }) {
  const sx = (s: number) => 45 + s * 14
  const fy = (f: number) => 52 + (f - 0.5) * 17.5

  return (
    <svg viewBox="0 0 160 160" className="h-40 w-40">
      <text x={80} y={22} fontSize={12} textAnchor="middle" className="font-['Liberation_Sans','DejaVu_Sans',sans-serif]">
        {chord.name}
      </text>
      {[...chord.marks].map((m, i) =>
        m === 'x' ? (
          <path key={i} d={`M${sx(i) - 5} 33l10 10m0 -10l-10 10`} stroke="#000" strokeWidth={2} />
        ) : m === 'o' ? (
          <circle key={i} cx={sx(i)} cy={38} r={5} fill="none" stroke="#000" strokeWidth={2} />
        ) : null
      )}
      <path
        d={[0, 1, 2, 3, 4, 5].map(i => `M${sx(i)} 52V140M45 ${52 + i * 17.5}H115`).join('')}
        stroke="#888"
        strokeWidth={1}
      />
      {chord.fret ? (
        <text x={34} y={66} fontSize={17} textAnchor="middle" className="font-['Liberation_Serif',serif]">{chord.fret}</text>
      ) : (
        <rect x={45} y={47} width={70} height={5} />
      )}
      {chord.dots.map(([s, f]) => (
        <circle key={`${s}-${f}`} cx={sx(s)} cy={fy(f)} r={6} />
      ))}
      {chord.barre && (
        <rect
          x={sx(chord.barre[0]) - 7}
          y={fy(chord.barre[2]) - 5}
          width={sx(chord.barre[1]) - sx(chord.barre[0]) + 14}
          height={10}
          rx={5}
        />
      )}
      {[...(chord.fingers ?? '')].map((n, i) => (
        <text key={i} x={sx(i)} y={152} fontSize={12} textAnchor="middle" className="font-['DejaVu_Serif',serif] font-bold">
          {n.trim()}
        </text>
      ))}
    </svg>
  )
}

function ChordLibrary() {
  return (
    <div role="dialog" aria-label="コードライブラリ" className="absolute left-2 top-0.5 w-[610px] overflow-hidden rounded-lg bg-[#383b44] shadow-[0_16px_40px_rgba(0,0,0,0.45)]">
      <div className="grid h-8 grid-cols-[1fr_auto_1fr] items-center border-b border-[#adacad] bg-linear-to-b from-[#ebe9eb] to-[#d3d1d3] pl-3 pr-4 text-xl leading-6 text-[#222]">
        <div className="flex gap-3.5">
          <button aria-label="Close" className="h-[22px] w-[22px] rounded-full border border-[#d9564c] bg-[#ee6b60]" />
          <button aria-label="Minimise" className="h-[22px] w-[22px] rounded-full border border-[#bfbfbf] bg-[#cfcdcf]" />
          <button aria-label="Zoom window" className="h-[22px] w-[22px] rounded-full border border-[#bfbfbf] bg-[#cfcdcf]" />
        </div>
        <span>コードライブラリ</span>
      </div>
      <div className="flex items-center justify-between px-6 py-6">
        <h2 className="text-[34px] font-bold leading-[52px] text-[#a1c1e0]">コードダイアグラムライブラリ</h2>
        <button aria-label="Add chord" className="h-[52px] w-[52px] rounded-lg bg-[#414d5e]">
          <svg viewBox="0 0 52 52" fill="#fff">
            <path d="M11 12V43M18 12V43M25 12V43M32 12V43M41 12V43M10 19H42M10 27H42M10 35H42M10 43H42" stroke="#a3a6b4" strokeWidth={2} />
            <path d="M10 8h32v4h-32z" />
            <circle cx={35} cy={15} r={2} /><circle cx={23} cy={23} r={2} /><circle cx={17} cy={31} r={2} />
            <path d="M32 24h6v8h8v6h-8v8h-6v-8h-8v-6h8z" stroke="#414d5e" strokeWidth={1} />
          </svg>
        </button>
      </div>
      <div className="mx-6 mb-6 mt-2 grid grid-cols-[repeat(3,160px)] bg-white pb-3">
        {LIBRARY.map(chord => (
          <LibraryChord key={chord.name} chord={chord} />
        ))}
      </div>
    </div>
  )
}

// ---------- score ----------

const CHORD_TEXT = "font-['Liberation_Sans','DejaVu_Sans',sans-serif] font-bold"

const ChordName = ({ x, y, children }: { x: number; y: number; children: ReactNode }) => (
  <text x={x} y={y - 4} fontSize={37} textAnchor="middle" stroke="#000" strokeWidth={1} className={CHORD_TEXT}>{children}</text>
)

const Simile = ({ x, y }: { x: number; y: number }) => (
  <g transform={`translate(${x} ${y})`}>
    <path d="M-14 16L14 -16" stroke="#000" strokeWidth={5} />
    <path d="M-14 -8C-13 -14 -6 -17 -5 -12C-5 -6 -12 -1 -14 -5z M5 10C6 4 13 1 14 6C14 12 7 17 5 13z" />
  </g>
)

const D7_SHAPE = [[2, 1], [1, 2], [3, 2], [4, 3]]

const HEADER_CHORDS: (Diagram & { x: number; label: number })[] = [
  { name: 'E7(♯9)', x: 957, label: 1007, marks: 'x    x', dots: D7_SHAPE },
  { name: 'C♯7(♯9)', x: 1169, label: 1220, marks: 'x    x', dots: [[2, 3], [1, 4], [3, 4], [4, 5]] },
  { name: 'D7(♯9)', x: 1387, label: 1438, marks: 'x    x', dots: D7_SHAPE, fret: 4 },
  { name: 'D♯7(♯9)', x: 1597, label: 1649, marks: 'x    x', dots: D7_SHAPE, fret: 5 },
  { name: 'E7(♯9)', x: 1811, label: 1862, marks: 'x    x', dots: D7_SHAPE, fret: 6 },
  { name: '', x: 2023, label: 2073, marks: 'x    x', dots: D7_SHAPE, fret: 6 },
  { name: '', x: 2227, label: 2278, marks: 'x xxxx', dots: [[1, 5]] },
  { name: 'A7', x: 2446, label: 2496, marks: 'x    x', dots: [[3, 1], [1, 2], [2, 2], [4, 3]], fret: 6 },
]

function HeaderChord({ chord }: { chord: Diagram & { x: number; label: number } }) {
  const sx = (s: number) => chord.x + s * 20
  const fy = (f: number) => 269 + f * 25

  return (
    <g>
      {chord.name ? <ChordName x={chord.label} y={224}>{chord.name}</ChordName> : <Simile x={chord.label} y={224} />}
      {[...chord.marks].map((m, i) =>
        m === 'x' ? <path key={i} d={`M${sx(i) - 8} 240l16 16m0 -16l-16 16`} stroke="#000" strokeWidth={3} /> : null
      )}
      <path
        d={[0, 1, 2, 3, 4, 5].map(i => `M${sx(i)} 269V395M${chord.x} ${fy(i)}h101`).join('')}
        stroke="#000"
        strokeWidth={2}
      />
      {chord.fret ? (
        <text x={chord.x - 16} y={292} fontSize={26} textAnchor="middle" className="font-['Liberation_Serif',serif]">{chord.fret}</text>
      ) : (
        <rect x={chord.x} y={262} width={101} height={7} />
      )}
      {chord.dots.map(([s, f]) => (
        <circle key={`${s}-${f}`} cx={sx(s)} cy={fy(f) - 12} r={8} />
      ))}
    </g>
  )
}

const STAFF_1 = 693
const STAFF_2 = 1328
const TAB = 895
const step = (top: number, k: number) => top + k * 9.5

const Notehead = ({ x, y }: { x: number; y: number }) => (
  <ellipse cx={x} cy={y} rx={14} ry={9} transform={`rotate(-35 ${x} ${y})`} />
)

const BigSharp = ({ x, y }: { x: number; y: number }) => (
  <g transform={`translate(${x} ${y - 2})`}>
    <path d="M-1 -26L-4 39M5 -38L2 34" stroke="#000" strokeWidth={3} strokeLinecap="round" />
    <path d="M-10 -5L10 -16V-8L8 -6L-10 4z M-10 12L10 1V9L8 11L-10 21z" />
  </g>
)

const BigNatural = ({ x, y }: { x: number; y: number }) => (
  <g transform={`translate(${x} ${y})`}>
    <path d="M-3 -42L-6 14M6 -16L4 41" stroke="#000" strokeWidth={3} strokeLinecap="round" />
    <path d="M-6 -9L7 -17V-6L-6 2z M-6 6L6 -2V8L-7 16z" />
  </g>
)

const Dash = ({ x, y }: { x: number; y: number }) => (
  <path d={`M${x - 6} ${y + 3}L${x - 3} ${y - 4}Q${x} ${y - 6} ${x + 5} ${y - 4}L${x + 3} ${y + 3}Q${x} ${y + 6} ${x - 5} ${y + 5}z`} />
)

const Staff = ({ top, lines, gap }: { top: number; lines: number; gap: number }) => (
  <path
    d={Array.from({ length: lines }, (_, i) => `M557 ${top + i * gap}H4000`).join('')}
    stroke="#333"
    strokeWidth={1.5}
  />
)

// the half note chords of bar 1
const CHORDS = [
  { x: 1369, heads: [1, 4, 7, 10], top: 657, sharps: [[1323, 10]], naturals: [[1346, 7]], name: 'C♯7(♯9)', label: 1373, tab: '5434' },
  { x: 1891, heads: [0, 3, 7, 9], top: 647, sharps: [[1823, 7]], naturals: [[1866, 0], [1846, 3], [1866, 9]], name: 'D7(♯9)', label: 1893, tab: '6545' },
  { x: 2410, heads: [0, 3, 6, 9], top: 647, sharps: [[2362, 0], [2337, 3], [2382, 9]], naturals: [[2388, 6]], name: 'D♯7(♯9)', label: 2413, tab: '7656' },
]

const Tab = ({ x, frets }: { x: number; frets: string }) => (
  <g>
    <path d={`M${x - 13} 872L${x - 12} 855Q${x} 852 ${x + 14} 855L${x + 12} 874`} fill="none" stroke="#000" strokeWidth={4} />
    {[...frets].map((f, i) => (
      <Fragment key={i}>
        <rect x={x - 11} y={TAB + (i + 1) * 28 - 8} width={22} height={16} fill="#f5f5f5" />
        <text x={x} y={TAB + (i + 1) * 28 + 11} fontSize={30} textAnchor="middle" className="font-['Liberation_Sans',sans-serif]">{f}</text>
      </Fragment>
    ))}
  </g>
)

const GROOVE = [-1, 2, 6, 8]

// x holds the stem positions of the riff
function Riff({ x, num, numX }: { x: number[]; num: number; numX: number }) {
  const y = (k: number) => step(STAFF_2, k)
  const [a, b, d, e, f, g] = x

  return (
    <g>
      <text x={numX} y={1318} fontSize={30} fill="#8a8a8a" textAnchor="middle" className={CHORD_TEXT}>{num}</text>
      <BigNatural x={a - 11} y={y(-1)} />
      <BigNatural x={a - 31} y={y(2)} />
      {GROOVE.map(k => (
        <Fragment key={k}>
          <Notehead x={a + 12} y={y(k)} />
          <Dash x={a + 33} y={k === -1 ? y(-1) : y(k - 1)} />
          <Notehead x={b + 12} y={y(k)} />
          <Notehead x={d + 12} y={y(k)} />
          <path d={`M${e} ${y(k) - 10}l14 20m0 -20l-14 20`} stroke="#000" strokeWidth={4} />
        </Fragment>
      ))}
      <path d={`M${a} ${y(-1)}V1470M${b} ${y(-1)}V1470M${d} ${y(-1)}V1476M${e} 1328V1478M${f} ${y(10)}V1494`} stroke="#000" strokeWidth={2} />
      <path d={`M${a - 1} 1465H${b + 1}V1474H${a - 1}z M${b - 17} 1450H${b}V1460H${b - 17}z`} />
      <path d={`M${d} 1454L${e} 1464V1473L${d} 1463z M${d} 1468L${f + 1} 1487V1496L${d} 1478z`} />
      <Dash x={d + 14} y={1294} />
      <Dash x={f + 13} y={1394} />
      <path d={`M${f - 4} ${y(10)}h35`} stroke="#555" strokeWidth={2} />
      <Notehead x={f + 12} y={y(10)} />
      <BigNatural x={g - 37} y={y(9)} />
      <Notehead x={g - 12} y={y(9)} />
      <path d={`M${g} 1348V1412`} stroke="#000" strokeWidth={2} />
      <Dash x={g - 12} y={1438} />
    </g>
  )
}

function Score() {
  return (
    <svg className="block h-full w-full" fill="#000" role="img" aria-label="Funky Horn">
      {/* sheet coordinates start at the window corner */}
      <g transform="translate(-432 -146)">
        <text x={2516} y={151} fontSize={32} className={CHORD_TEXT}>MODIE</text>
        {HEADER_CHORDS.map(ch => <HeaderChord key={ch.x} chord={ch} />)}

        {/* first system */}
        <Staff top={STAFF_1} lines={5} gap={19} />
        <Staff top={TAB} lines={6} gap={28.3} />
        <path d="M557 693V1037" stroke="#000" strokeWidth={2} />
        <path d="M597 800Q606 800 602 812Q596 812 597 800zM831 790L829 830" stroke="#000" strokeWidth={3} />
        {CHORDS.map(ch => (
          <g key={ch.x}>
            <ChordName x={ch.label} y={618}>{ch.name}</ChordName>
            {ch.heads.map(k => <Notehead key={k} x={ch.x} y={step(STAFF_1, k)} />)}
            {ch.sharps.map(([x, k]) => <BigSharp key={x} x={x} y={step(STAFF_1, k)} />)}
            {ch.naturals.map(([x, k]) => <BigNatural key={k} x={x} y={step(STAFF_1, k)} />)}
            {ch.heads.includes(10) && <path d={`M${ch.x - 15} ${step(STAFF_1, 10)}h34`} stroke="#555" strokeWidth={2} />}
            <path d={`M${ch.x + 12} ${ch.top}V${step(STAFF_1, ch.heads[3])}`} stroke="#000" strokeWidth={2} />
            <Tab x={ch.x + 1} frets={ch.tab} />
          </g>
        ))}
        <Tab x={851} frets="4323" />
        {[['T', 940], ['A', 981], ['B', 1025]].map(([l, y]) => (
          <text key={l} x={597} y={y} fontSize={46} textAnchor="middle" stroke="#000" strokeWidth={1} className={CHORD_TEXT}>{l}</text>
        ))}
        <text transform="translate(538 914) rotate(-90)" fontSize={23} className={CHORD_TEXT}>EL.GUIT.</text>

        {/* second system */}
        <rect x={789} y={1133} width={29} height={49} fill="none" stroke="#000" strokeWidth={3} />
        <text x={803} y={1171} fontSize={36} textAnchor="middle" className={CHORD_TEXT}>A</text>
        <ChordName x={800} y={1242}>E7(♯9)</ChordName>
        <Staff top={STAFF_2} lines={5} gap={19} />
        <path d="M557 1328V4000" stroke="#000" strokeWidth={2} />
        <path d="M1750 1328V1404" stroke="#000" strokeWidth={3} />
        <g fill="none" stroke="#000" strokeLinecap="round">
          <path strokeWidth={6} d="M589 1288C591 1330 597 1380 602 1404C607 1424 605 1434 601 1445" />
          <path strokeWidth={8} d="M590 1289C602 1300 600 1318 594 1336C584 1356 574 1366 574 1386C574 1420 604 1420 614 1398C626 1374 618 1362 608 1367C594 1374 586 1390 587 1402" />
        </g>
        {[[653, 0], [672, 3], [691, -1], [711, 2]].map(([x, k]) => <BigSharp key={x} x={x} y={step(STAFF_2, k)} />)}
        <Riff num={2} numX={734} x={[785, 925, 1007, 1093, 1171, 1311]} />
        <path d="M1473 1404V1466M1555 1404V1466" stroke="#000" strokeWidth={2} />
        <path d="M1472 1404H1556V1413H1472z M1472 1417H1556V1426H1472z" />
        <path d="M1446 1442h34M1446 1461h34M1528 1442h34M1528 1461h34" stroke="#555" strokeWidth={1} />
        <Notehead x={1461} y={1468} /><Notehead x={1543} y={1468} />
        <path d="M1612 1354C1612 1346 1622 1348 1622 1358C1628 1360 1632 1352 1638 1350C1632 1362 1626 1374 1622 1386L1618 1384L1629 1362C1622 1368 1612 1364 1612 1354z" />

        <Riff num={3} numX={1748} x={[1801, 1961, 2055, 2153, 2241, 2397]} />
        <Simile x={2387} y={1243} />
        <path d="M2620 1287h2v20h-2z" />
        <path d="M2554 1423h34M2554 1442h34" stroke="#555" strokeWidth={2} />
        <Notehead x={2571} y={1441} />
        <path d="M2583 1362V1441" stroke="#000" strokeWidth={2} />
        <path d="M2582 1362L2662 1370V1379L2582 1371z M2582 1376L2662 1384V1394L2582 1386z" />
        <path d="M2571 1457Q2588 1480 2630 1468Q2592 1474 2571 1457z" stroke="#000" />
      </g>
    </svg>
  )
}

export default function App() {
  return (
    <div className="flex h-screen flex-col overflow-hidden font-['Liberation_Sans','Noto_Sans_CJK_JP',sans-serif]">
      <Toolbar />
      <h1 className="h-[46px] border-b-2 border-[#1b1e24] bg-[#5c6b80] pl-56 pr-3 text-center text-[26px] font-bold leading-[44px] text-white">
        Funky Horn
      </h1>
      <div className="flex min-h-0 flex-1">
        <Sidebar />
        <main className="relative min-w-0 flex-1 overflow-hidden bg-[#f5f5f5]">
          <Score />
          <ChordLibrary />
        </main>
      </div>
    </div>
  )
}
